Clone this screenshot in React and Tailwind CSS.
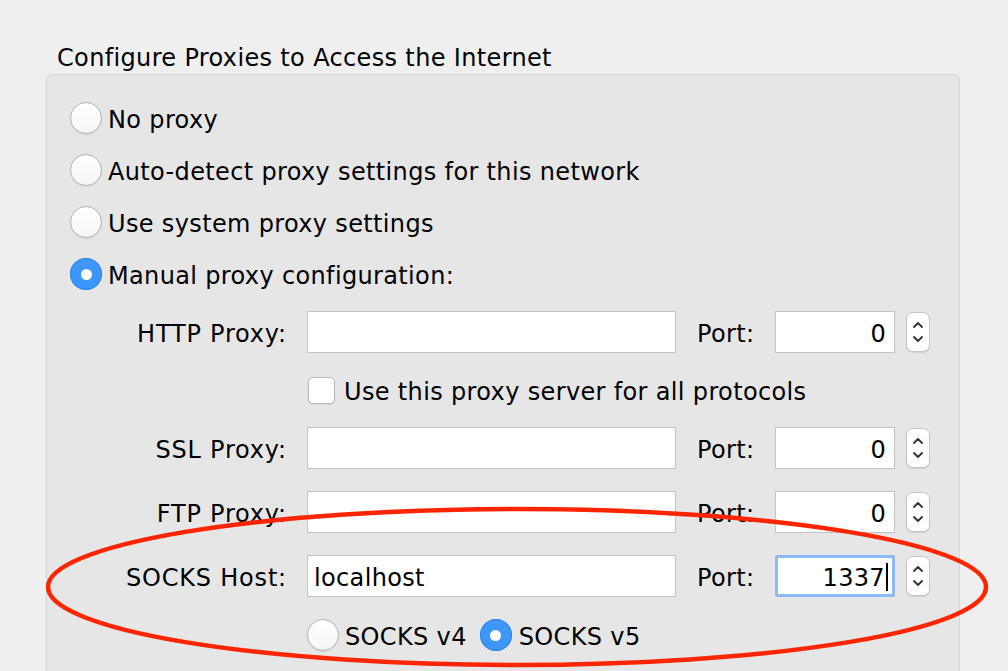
import React from "react";

const font = { fontFamily: '"DejaVu Sans", "Liberation Sans", sans-serif' };

const Radio = ({ checked }) =>
  checked ? (
    <span className="flex h-[32px] w-[32px] shrink-0 items-center justify-center rounded-full bg-[#3d97f8] shadow-[inset_0_0_0_1px_#2f86e8]">
      <span className="h-[11px] w-[11px] rounded-full bg-white" />
    </span>
  ) : (
    <span className="h-[32px] w-[32px] shrink-0 rounded-full border border-[#b3b3b3] bg-gradient-to-b from-white to-[#f6f6f6] shadow-[0_1px_1px_rgba(0,0,0,0.08)]" />
  );

const RadioRow = ({ label, checked }) => (
  <div className="flex h-[52px] items-center gap-[6px] pl-[23px]">
    <Radio checked={checked} />
    <span className="pt-[4px] text-[24px] leading-none tracking-[0.35px] text-black">{label}</span>
  </div>
);

const Stepper = () => (
  <div className="flex h-[40px] w-[24px] items-center justify-center rounded-[7px] border border-[#c4c4c4] bg-white shadow-[0_1px_1px_rgba(0,0,0,0.1)]">
    <svg width="14" height="30" viewBox="0 0 14 30" fill="none">
      <polyline points="3,10 7,6 11,10" stroke="#3a3a3a" strokeWidth="2" strokeLinecap="round" strokeLinejoin="round" />
      <polyline points="3,20 7,24 11,20" stroke="#3a3a3a" strokeWidth="2" strokeLinecap="round" strokeLinejoin="round" />
    </svg>
  </div>
);

const text = "pt-[4px] text-[24px] leading-none tracking-[0.35px] text-black";

const ProxyRow = ({ label, host = "", port = "0", focused = false }) => (
  <div className="flex h-[64px] items-center">
    <div className="w-[240px] pt-[4px] text-right text-[24px] leading-none tracking-[0.8px] text-black">
      {label}
    </div>
    <div className={"ml-[20px] flex h-[42px] w-[369px] items-center border border-[#c3c3c3] bg-white px-[6px] " + text}>
      {host}
    </div>
    <div className={"ml-[21px] w-[58px] " + text}>Port:</div>
    <div
      className={
        focused
          ? "ml-[20px] flex h-[42px] w-[120px] items-center justify-end rounded-[2px] border-[3px] border-[#8cbaf6] bg-white pr-[4px] text-[24px] leading-none text-black"
          : "ml-[20px] flex h-[42px] w-[120px] items-center justify-end border border-[#c3c3c3] bg-white pr-[8px] text-[24px] leading-none text-black"
      }
    >
      <span className="pt-[4px] tracking-[0.35px]">{port}</span>
      {focused && <span className="ml-[1px] mt-[2px] h-[28px] w-[2px] bg-black" />}
    </div>
    <div className="ml-[11px]">
      <Stepper />
    </div>
  </div>
);

export default function App() {
  return (
    <div className="relative h-[671px] w-[1008px] overflow-hidden bg-[#efefef]" style={font}>
      <div className="pl-[57px] pt-[44px] text-[24px] leading-[28px] tracking-[0.35px] text-black">
        Configure Proxies to Access the Internet
      </div>

      <div className="ml-[46px] mt-[2px] h-[640px] w-[914px] rounded-t-[6px] border border-[#d7d7d7] bg-[#e6e6e6] pt-[17px]">
        <RadioRow label="No proxy" />
        <RadioRow label="Auto-detect proxy settings for this network" />
        <RadioRow label="Use system proxy settings" />
        <RadioRow label="Manual proxy configuration:" checked />

        <ProxyRow label="HTTP Proxy:" />

        <div className="flex h-[52px] items-center pl-[261px]">
          <span className="h-[27px] w-[27px] rounded-[5px] border border-[#b7b7b7] bg-white shadow-[0_1px_1px_rgba(0,0,0,0.06)]" />
          <span className={"ml-[9px] " + text}>Use this proxy server for all protocols</span>
        </div>

        <ProxyRow label="SSL Proxy:" />
        <ProxyRow label="FTP Proxy:" />
        <ProxyRow label="SOCKS Host:" host="localhost" port="1337" focused />

        <div className="flex h-[54px] items-center pl-[260px]">
          <Radio />
          <span className={"ml-[6px] " + text}>SOCKS v4</span>
          <span className="ml-[13px]">
            <Radio checked />
          </span>
          <span className={"ml-[7px] " + text}>SOCKS v5</span>
        </div>
      </div>

      <svg
        className="pointer-events-none absolute left-0 top-0"
        width="1008"
        height="671"
        viewBox="0 0 1008 671"
      >
        <ellipse cx="517" cy="587" rx="469" ry="78" fill="none" stroke="#ff2500" strokeWidth="4.5" />
      </svg>
    </div>
  );
}
